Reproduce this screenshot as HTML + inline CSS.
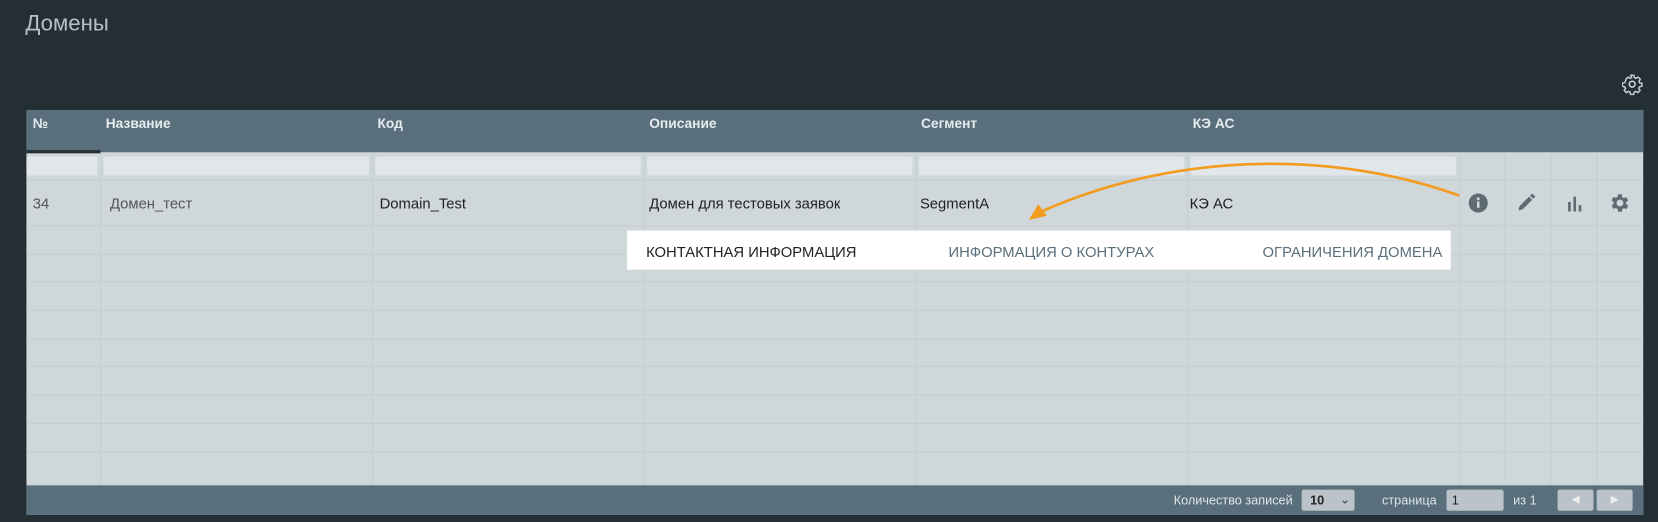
<!DOCTYPE html>
<html><head><meta charset="utf-8"><style>
*{margin:0;padding:0;box-sizing:border-box}
html,body{width:1658px;height:522px;background:#242e35;overflow:hidden}
#w{position:absolute;left:0;top:0;width:1568px;height:494px;transform:scale(1.05740);transform-origin:0 0;font-family:"Liberation Sans",sans-serif}
.t{position:absolute;left:24px;top:11px;font-size:21px;color:#b5c0c7}
.tbl{position:absolute;left:25px;top:104px;width:1529px;height:383px;background:#cfd7db}
.hd{position:absolute;left:0;top:0;width:100%;height:40px;background:#5a6f7c}
.hd span{position:absolute;top:5px;font-size:13px;font-weight:bold;color:#e6ecef}
.ft{position:absolute;left:0;top:355px;width:100%;height:28px;background:#5a6f7c;font-size:12px;color:#dde4e8}
.ft span{position:absolute;top:7px}
.fl{position:absolute;top:44px;height:18px;background:#e0e6e9;border-radius:2px}
.vl{position:absolute;top:40px;bottom:28px;width:1px;background:#c4cdd2}
.hl{position:absolute;left:0;right:0;height:1px;background:#c4cdd2}
.c{position:absolute;top:80px;font-size:14px;color:#222}
.pop{position:absolute;left:593px;top:218px;width:779px;height:37px;background:#fff;font-size:14px}
.pop span{position:absolute;top:12px}
.bx{position:absolute;background:#b9c3c9;border-radius:2px}
</style></head><body><div id="w">
<div class="t">Домены</div>
<svg style="position:absolute;left:1534px;top:70px" width="20" height="20" viewBox="0 0 24 24"><path fill="none" stroke="#c9d2d8" stroke-width="1.8" d="M10 2h4l.6 3 2 1 2.6-1.7 2.8 2.8L20.3 9.7l1 2 2.7.3v4l-3 .6-1 2 1.7 2.6-2.8 2.8-2.6-1.7-2 1-.6 3h-4l-.6-3-2-1-2.6 1.7-2.8-2.8 1.7-2.6-1-2-3-.6v-4l3-.6 1-2L3.8 7.1 6.6 4.3l2.6 1.7 2-1z" transform="scale(.9) translate(1 -.5)"/><circle cx="11.5" cy="11.5" r="3.3" fill="none" stroke="#c9d2d8" stroke-width="1.8"/></svg>
<div class="tbl">
<div class="hd">
<div style="position:absolute;left:0;top:38px;width:70px;height:3px;background:#242e35"></div>
<span style="left:6px">№</span><span style="left:75px">Название</span><span style="left:332px">Код</span><span style="left:589px">Описание</span><span style="left:846px">Сегмент</span><span style="left:1103px">КЭ АС</span>
</div>
<div class="fl" style="left:0;width:67px"></div><div class="fl" style="left:73px;width:251px"></div><div class="fl" style="left:330px;width:251px"></div><div class="fl" style="left:587px;width:251px"></div><div class="fl" style="left:844px;width:251px"></div><div class="fl" style="left:1101px;width:251px"></div>
<div class="hl" style="top:66px"></div>
<div class="hl" style="top:109px"></div><div class="hl" style="top:136px"></div><div class="hl" style="top:162px"></div><div class="hl" style="top:189px"></div><div class="hl" style="top:216px"></div><div class="hl" style="top:242px"></div><div class="hl" style="top:269px"></div><div class="hl" style="top:296px"></div><div class="hl" style="top:323px"></div>
<div class="vl" style="left:70px"></div><div class="vl" style="left:327px"></div><div class="vl" style="left:584px"></div><div class="vl" style="left:841px"></div><div class="vl" style="left:1098px"></div><div class="vl" style="left:1355px"></div><div class="vl" style="left:1397px"></div><div class="vl" style="left:1441px"></div><div class="vl" style="left:1485px"></div>
<div class="c" style="left:6px;color:#555">34</div><div class="c" style="left:79px;color:#555">Домен_тест</div><div class="c" style="left:334px">Domain_Test</div><div class="c" style="left:589px">Домен для тестовых заявок</div><div class="c" style="left:845px">SegmentA</div><div class="c" style="left:1100px">КЭ АС</div>
<svg style="position:absolute;left:1363px;top:78px" width="20" height="20"><circle cx="10" cy="10" r="9" fill="#5e6b73"/><circle cx="10" cy="6" r="1.4" fill="#cfd7db"/><rect x="8.8" y="8.5" width="2.4" height="6" fill="#cfd7db"/></svg>
<svg style="position:absolute;left:1408px;top:78px" width="20" height="20"><path d="M3 17l1-4 9-9 3 3-9 9z M14 3l2-2 3 3-2 2z" fill="#5e6b73"/></svg>
<svg style="position:absolute;left:1455px;top:78px" width="20" height="20"><rect x="3" y="9" width="2.5" height="9" fill="#5e6b73"/><rect x="8" y="4" width="2.5" height="14" fill="#5e6b73"/><rect x="13" y="12" width="2.5" height="6" fill="#5e6b73"/></svg>
<svg style="position:absolute;left:1496px;top:77px" width="22" height="22" viewBox="0 0 24 24"><path fill="#5e6b73" d="M19.4 13a7.5 7.5 0 000-2l2.1-1.6-2-3.5-2.5 1a7.5 7.5 0 00-1.7-1L15 3h-4l-.4 2.7a7.5 7.5 0 00-1.700 1l-2.5-1-2 3.5L6.5 11a7.5 7.5 0 000 2l-2.1 1.6 2 3.5 2.5-1a7.5 7.5 0 001.7 1L11 21h4l.4-2.7a7.5 7.5 0 001.7-1l2.5 1 2-3.5zM13 15.5a3.5 3.5 0 110-7 3.5 3.5 0 010 7z" transform="translate(-1 0)"/></svg>
<div class="ft"><span style="left:1085px">Количество записей</span>
<div class="bx" style="left:1206px;top:4px;width:50px;height:20px"><span style="left:8px;top:3px;color:#222;font-weight:bold">10</span><span style="left:36px;top:2px;color:#444">⌄</span></div>
<span style="left:1282px">страница</span>
<div class="bx" style="left:1343px;top:4px;width:54px;height:20px"><span style="left:5px;top:3px;color:#222">1</span></div>
<span style="left:1406px">из 1</span>
<div class="bx" style="left:1448px;top:4px;width:34px;height:20px;color:#eee;font-size:10px;text-align:center;line-height:20px">◀</div>
<div class="bx" style="left:1485px;top:4px;width:34px;height:20px;color:#eee;font-size:10px;text-align:center;line-height:20px">▶</div>
</div>
</div>
<div class="pop"><span style="left:18px;color:#222">КОНТАКТНАЯ ИНФОРМАЦИЯ</span><span style="left:304px;color:#5a6f7c">ИНФОРМАЦИЯ О КОНТУРАХ</span><span style="left:601px;color:#5a6f7c">ОГРАНИЧЕНИЯ ДОМЕНА</span></div>
<svg style="position:absolute;left:0;top:0" width="1568" height="494"><path d="M1380 185 C1270 145 1120 140 985 200" fill="none" stroke="#f39c1d" stroke-width="2.5"/><path d="M973 208 L982 193 L990 204 z" fill="#f39c1d"/></svg>
</div></body></html>
